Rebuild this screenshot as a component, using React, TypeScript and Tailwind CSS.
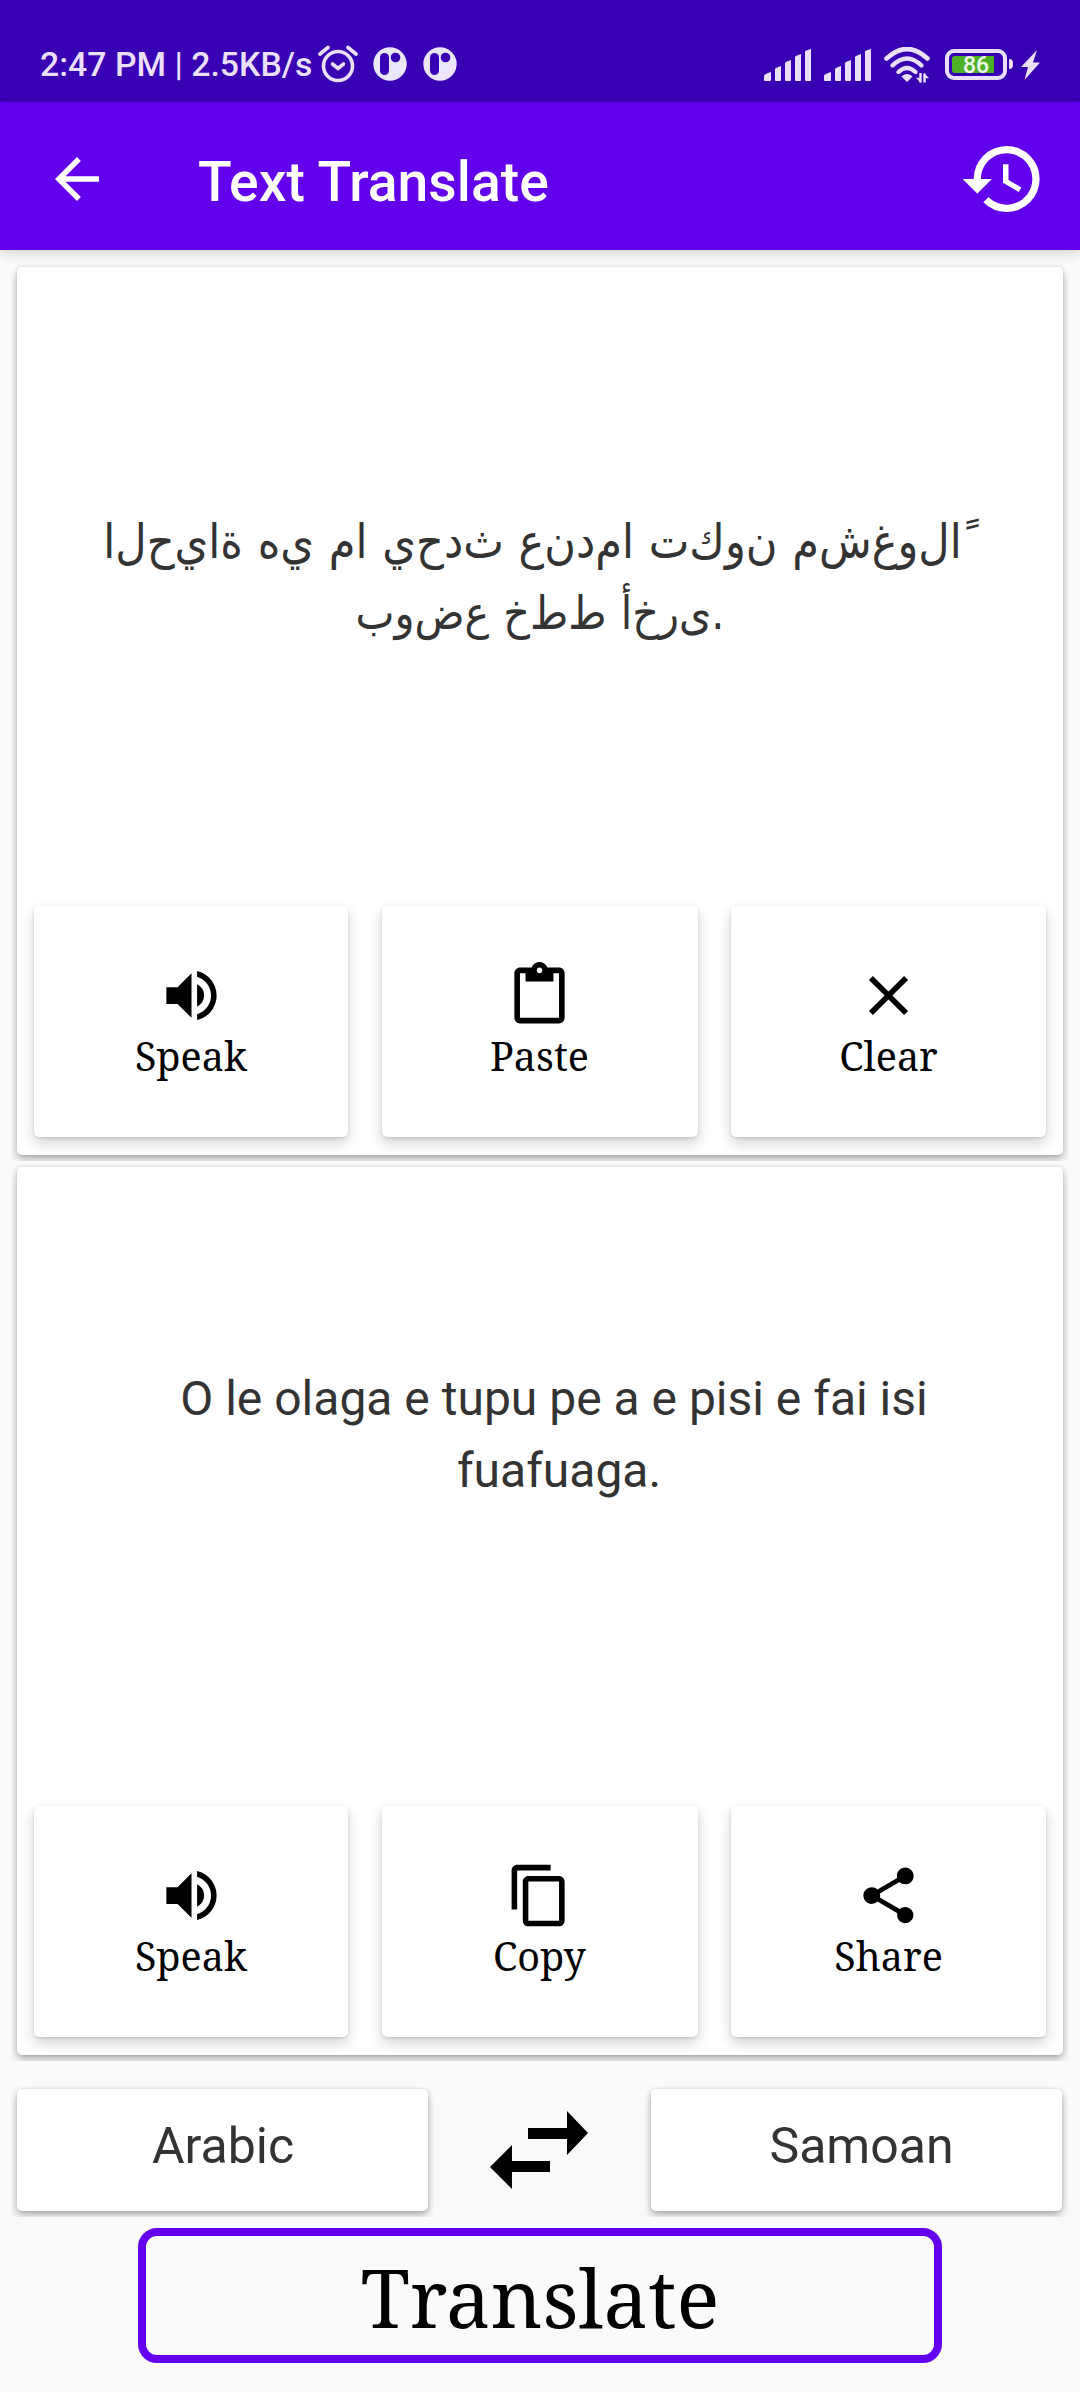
import type { ReactNode } from 'react';
import type { IconType } from 'react-icons';
import {
  MdArrowBack,
  MdClose,
  MdContentCopy,
  MdContentPaste,
  MdHistory,
  MdShare,
  MdVolumeUp,
} from 'react-icons/md';

interface Action {
  label: string;
  icon: IconType;
}

const SOURCE_ACTIONS: Action[] = [
  { label: 'Speak', icon: MdVolumeUp },
  { label: 'Paste', icon: MdContentPaste },
  { label: 'Clear', icon: MdClose },
];

const RESULT_ACTIONS: Action[] = [
  { label: 'Speak', icon: MdVolumeUp },
  { label: 'Copy', icon: MdContentCopy },
  { label: 'Share', icon: MdShare },
];

const SOURCE_LINES = ['الحياة هي ما يحدث عندما تكون مشغولاً', 'بوضع خطط أخرى.'];

// Zero-width non-joiners keep every letter in its isolated form
const unjoin = (text: string) => text.split('').join('\u200c');

function SignalBars() {
  return (
    <svg width="48" height="32" viewBox="0 0 48 32" fill="#ebdffc">
      <path d="M0 31v-4q0-2 7-4v8q0 1-1 1H1q-1 0-1-1z" />
      <path d="M11 31V20q0-1 6-3v14q0 1-1 1h-4q-1 0-1-1z" />
      <path d="M21 31V14q0-1 6-3v20q0 1-1 1h-4q-1 0-1-1z" />
      <path d="M31 31V8q0-1 6-3v26q0 1-1 1h-4q-1 0-1-1z" />
      <path d="M41 31V2.500q0-1 6-2.500v31q0 1-1 1h-4q-1 0-1-1z" />
    </svg>
  );
}

function AlarmIcon() {
  return (
    <svg width="40" height="38" viewBox="0 0 40 38" fill="none" stroke="#ebdffc" strokeLinecap="round">
      <circle cx="20" cy="21" r="14.500" strokeWidth="3.600" />
      <path d="M2 9 10 2.500M38 9 30 2.500" strokeWidth="3.600" />
      <path d="m14.500 19 5.500 4.500 5.500-4.500" strokeWidth="3.600" />
    </svg>
  );
}

function AppBadge() {
  return (
    <svg width="34" height="34" viewBox="0 0 34 34">
      <circle cx="17" cy="17" r="16.700" fill="#ebe6fa" />
      <rect x="7" y="6" width="9" height="22" rx="4.500" fill="#3700b3" />
      <circle cx="22.500" cy="10.500" r="4.800" fill="#3700b3" />
    </svg>
  );
}

function WifiIcon() {
  return (
    <svg width="46" height="36" viewBox="0 0 46 36" fill="none" stroke="#ebdffc">
      <path d="M2.500 11.500Q23-7.500 43.500 11.500" strokeWidth="4.600" strokeLinecap="round" />
      <path d="M8.500 18.500Q23 4.500 37.500 18.500" strokeWidth="4.400" strokeLinecap="round" />
      <path d="M14.500 25Q23 17 31.500 25" strokeWidth="4.400" strokeLinecap="round" />
      <path d="M18.500 29.500q4.500-3.500 9 0L23 34z" fill="#ebdffc" strokeWidth="1.500" strokeLinejoin="round" />
      <path d="M36.500 26v9.500M40.500 35.500v-9" strokeWidth="2.400" />
      <path d="m32.500 31 4 4.500V31zM40.500 26.500v4.500h4z" fill="#ebdffc" strokeWidth="0.500" />
    </svg>
  );
}

function StatusBar() {
  return (
    <div className="flex h-[102px] items-start bg-[#3700b3] pt-[45px] pr-10 pl-10">
      <span className="w-[278px] text-[33.8px] leading-10 font-medium whitespace-nowrap text-[#ebdffc]">
        2:47 PM | 2.5KB/s
      </span>
      <div className="flex items-center">
        <AlarmIcon />
        <div className="ml-[15px] flex gap-4">
          <AppBadge />
          <AppBadge />
        </div>
      </div>
      <div className="ml-auto flex items-start pt-0.5">
        <div className="mt-0.5 flex gap-3">
          <SignalBars />
          <SignalBars />
        </div>
        <div className="ml-3">
          <WifiIcon />
        </div>
        <div className="mt-0.5 ml-[15px] flex h-[31px] w-[62px] items-center rounded-[9px] border-4 border-[#ebdffc] pl-[3px]">
          <div className="flex h-[17px] w-[42px] items-center justify-center rounded-l-[3px] bg-[#4caf26] pt-px pl-1.5 text-[23px] leading-none font-medium text-[#f0f8ec]">
            86
          </div>
        </div>
        <div className="mt-3 ml-0.5 h-2.5 w-1 rounded-r-sm bg-[#ebdffc]" />
        <svg className="mt-[3px] ml-2" width="19" height="30" viewBox="0 0 19 30" fill="#ebdffc">
          <path d="M16 0 0 17h7L3.500 30 19 12.500h-7z" />
        </svg>
      </div>
    </div>
  );
}

function AppBar() {
  return (
    <header className="relative z-10 flex h-[148px] items-center bg-[#6200ee] pr-[33px] pl-11 text-white shadow-[0_4px_10px_rgba(0,0,0,0.14)]">
      <MdArrowBack className="mt-1.5 size-[66px]" />
      <h1 className="ml-[88px] pt-3.5 text-[55.3px] leading-none font-medium">Text Translate</h1>
      <MdHistory className="mt-1.5 ml-auto size-[88px]" />
    </header>
  );
}

function ActionButton({ label, icon: Icon }: Action) {
  return (
    <button className="flex h-[231px] flex-col items-center rounded-[5px] bg-white pt-14 shadow-[0_6px_14px_rgba(0,0,0,0.18),0_1px_3px_rgba(0,0,0,0.12)]">
      <Icon className="size-[67px]" />
      <span className="font-['Noto_Serif',serif] text-[39.5px] leading-[54px]">{label}</span>
    </button>
  );
}

interface TextCardProps {
  actions: Action[];
  children: ReactNode;
}

function TextCard({ actions, children }: TextCardProps) {
  return (
    <section className="h-[900px] overflow-hidden p-1.5">
      <div className="flex h-full flex-col justify-between rounded-[5px] bg-white px-[17px] pb-[18px] shadow-[0_5px_10px_rgba(0,0,0,0.24),0_1px_4px_rgba(0,0,0,0.18)]">
        {children}
        <div className="grid grid-cols-[314px_316px_315px] gap-x-[33.5px]">
          {actions.map((action) => (
            <ActionButton key={action.label} {...action} />
          ))}
        </div>
      </div>
    </section>
  );
}

function LanguageButton({ children }: { children: ReactNode }) {
  return (
    <div className="h-[134px] w-[423px] overflow-hidden p-1.5">
      <button className="flex h-[122px] w-full justify-center rounded-[5px] bg-white pt-[27px] text-[50px] leading-[60px] text-[#333] shadow-[0_5px_10px_rgba(0,0,0,0.24),0_1px_4px_rgba(0,0,0,0.18)]">
        {children}
      </button>
    </div>
  );
}

export default function App() {
  return (
    <div className="h-[2400px] w-[1080px] overflow-hidden border-b-8 border-white bg-[#fafafa] font-['Roboto',sans-serif] text-black">
      <StatusBar />
      <AppBar />

      <main className="px-[11px] pt-[11px]">
        <TextCard actions={SOURCE_ACTIONS}>
          <div className="pt-[238px] text-center font-['DejaVu_Sans_Condensed','DejaVu_Sans',sans-serif] text-[48px] leading-[72px] text-[#333]">
            {SOURCE_LINES.map((line) => (
              <p
                key={line}
                className="pr-[15px] whitespace-nowrap [direction:ltr] [unicode-bidi:bidi-override] [word-spacing:1px] last:pr-0 last:text-[46px]"
              >
                {unjoin(line)}
              </p>
            ))}
          </div>
        </TextCard>
        <TextCard actions={RESULT_ACTIONS}>
          <div className="pt-[196px] pl-7 text-center text-[48px] leading-[72px] text-[#333]">
            <p>O le olaga e tupu pe a e pisi e fai isi</p>
            <p className="pl-2.5">fuafuaga.</p>
          </div>
        </TextCard>

        <div className="mt-[22px] flex items-start">
          <LanguageButton>
            <span className="pl-px">Arabic</span>
          </LanguageButton>
          <svg className="mr-[57px] ml-14 mt-7" width="98" height="78" viewBox="0 0 98 78">
            <path d="M38 17h39V0l21 22-21 22V28H38zM60 50v11H22v17L0 56l22-22v16z" />
          </svg>
          <LanguageButton>
            <span className="pl-2.5">Samoan</span>
          </LanguageButton>
        </div>

        <button className="mt-[11px] ml-[127px] flex h-[135px] w-[804px] items-center justify-center rounded-[19px] border-8 border-[#6200ee] pt-0.5 font-['Noto_Serif',serif] text-[80px] leading-none">
          Translate
        </button>
      </main>
    </div>
  );
}
